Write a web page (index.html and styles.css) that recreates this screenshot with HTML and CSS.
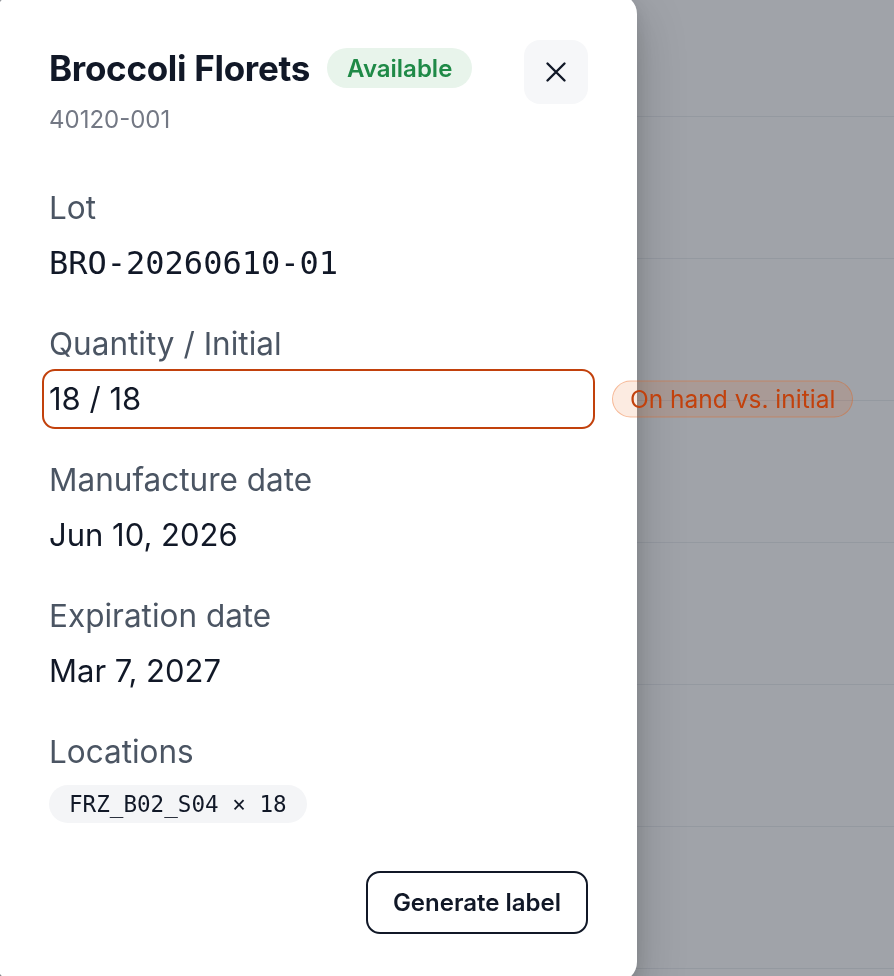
FILE: index.html
```html
<!DOCTYPE html>
<html lang="en">
<head>
<meta charset="utf-8">
<title>Broccoli Florets · Lot detail</title>
<link rel="stylesheet" href="styles.css">
</head>
<body>
  <main class="inventory">
    <div class="inventory-row"></div>
    <div class="inventory-row"></div>
    <div class="inventory-row"></div>
    <div class="inventory-row"></div>
    <div class="inventory-row"></div>
    <div class="inventory-row"></div>
    <div class="inventory-row"></div>
  </main>

  <div class="scrim"></div>

  <aside class="drawer" role="dialog" aria-labelledby="lot-title">
    <header class="drawer-head">
      <div class="head-text">
        <div class="title-row">
          <h1 id="lot-title" class="title">Broccoli Florets</h1>
          <span class="status">Available</span>
        </div>
        <div class="sku">40120-001</div>
      </div>
      <button class="close" type="button" aria-label="Close">
        <svg width="24" height="24" viewBox="0 0 24 24" fill="none" stroke="currentColor" stroke-width="2.4" stroke-linecap="round">
          <path d="M3.5 3.5l17 17M20.5 3.5l-17 17"/>
        </svg>
      </button>
    </header>

    <dl class="fields">
      <div class="field">
        <dt class="label">Lot</dt>
        <dd class="value mono">BRO-20260610-01</dd>
      </div>
      <div class="field">
        <dt class="label">Quantity / Initial</dt>
        <dd class="value flagged">18 / 18<span class="flag">On hand vs. initial</span></dd>
      </div>
      <div class="field">
        <dt class="label">Manufacture date</dt>
        <dd class="value">Jun 10, 2026</dd>
      </div>
      <div class="field">
        <dt class="label">Expiration date</dt>
        <dd class="value">Mar 7, 2027</dd>
      </div>
      <div class="field">
        <dt class="label">Locations</dt>
        <dd class="chips"><span class="chip">FRZ_B02_S04 × 18</span></dd>
      </div>
    </dl>

    <footer class="drawer-foot">
      <button class="btn-outline" type="button">Generate label</button>
    </footer>
  </aside>
</body>
</html>
```

FILE: styles.css
```css
* { box-sizing: border-box; }

html, body {
  margin: 0;
  height: 976px;
  overflow: hidden;
}

body {
  background: #ffffff;
  font-family: Inter, "Noto Sans", sans-serif;
  color: #111827;
}

/* page content behind the drawer */
.inventory {
  display: flex;
  flex-direction: column;
}

.inventory-row {
  height: 142px;
  border-bottom: 1px solid #eceef1;
  flex: none;
}

.inventory-row:first-child {
  height: 117px;
}

.scrim {
  position: fixed;
  inset: 0;
  background: rgba(17, 24, 39, 0.4);
}

/* side drawer */
.drawer {
  position: fixed;
  left: -4px;
  top: -6px;
  width: 641px;
  height: 988px;
  background: #ffffff;
  border-radius: 20px;
  box-shadow: 0 20px 50px rgba(0, 0, 0, 0.22), 0 6px 16px rgba(0, 0, 0, 0.1);
  padding: 46px 49px 0 53px;
  display: flex;
  flex-direction: column;
}

.drawer-head {
  display: flex;
  justify-content: space-between;
  align-items: flex-start;
}

.title-row {
  display: flex;
  align-items: center;
  gap: 17px;
  height: 56px;
}

.title {
  margin: 0;
  font-size: 35px;
  font-weight: 700;
  letter-spacing: -0.3px;
  line-height: 56px;
  color: #111827;
}

.status {
  display: inline-flex;
  align-items: center;
  height: 40px;
  padding: 0 20px;
  border-radius: 20px;
  background: #e8f4eb;
  color: #1f8a47;
  font-size: 24px;
  font-weight: 600;
}

.sku {
  margin-top: 8px;
  font-size: 24px;
  line-height: 32px;
  color: #737884;
}

.close {
  width: 64px;
  height: 64px;
  border: 0;
  border-radius: 16px;
  background: #f6f7f9;
  color: #111827;
  display: flex;
  align-items: center;
  justify-content: center;
  padding: 0;
}

.fields {
  margin: 52px 0 0;
  display: flex;
  flex-direction: column;
  gap: 38px;
}

.field {
  display: flex;
  flex-direction: column;
  gap: 12px;
}

.label {
  font-size: 31.5px;
  line-height: 40px;
  color: #4b5563;
}

.value {
  margin: 0;
  font-size: 31px;
  line-height: 46px;
  color: #111827;
}

.mono {
  font-family: "DejaVu Sans Mono", "Liberation Mono", monospace;
  font-size: 32px;
}

.flagged {
  position: relative;
  border-radius: 6px;
  outline: 2.5px solid #c2410c;
  outline-offset: 5px;
}

.flag {
  position: absolute;
  left: calc(100% + 24px);
  top: 50%;
  transform: translateY(-50%);
  height: 37px;
  display: flex;
  align-items: center;
  padding: 0 17px;
  border-radius: 19px;
  white-space: nowrap;
  background: rgba(234, 88, 12, 0.12);
  border: 1.5px solid rgba(234, 88, 12, 0.35);
  color: #c2410c;
  font-size: 24.5px;
  line-height: 1;
}

.chips {
  margin: 1px 0 0;
  display: flex;
}

.chip {
  height: 38px;
  display: inline-flex;
  align-items: center;
  padding: 0 20px;
  border-radius: 19px;
  background: #f4f5f7;
  font-family: "DejaVu Sans Mono", "Liberation Mono", monospace;
  font-size: 22.6px;
  color: #111827;
}

.drawer-foot {
  margin-top: 48px;
  display: flex;
  justify-content: flex-end;
}

.btn-outline {
  height: 63px;
  padding: 0 25px;
  border: 2px solid #111827;
  border-radius: 14px;
  background: #ffffff;
  font-family: Inter, "Noto Sans", sans-serif;
  font-size: 24px;
  font-weight: 600;
  color: #111827;
}
```
